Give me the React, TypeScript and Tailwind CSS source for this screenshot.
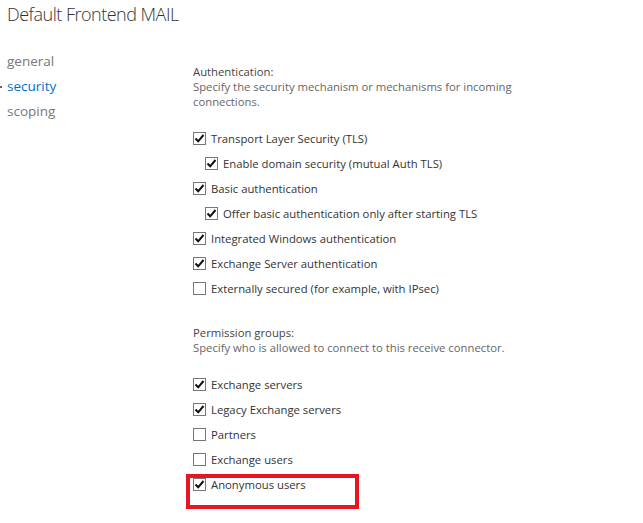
import React from "react";

interface Item {
  label: string;
  checked: boolean;
  indent?: boolean;
  marked?: boolean;
}

const authItems: Item[] = [
  { label: "Transport Layer Security (TLS)", checked: true },
  { label: "Enable domain security (mutual Auth TLS)", checked: true, indent: true },
  { label: "Basic authentication", checked: true },
  { label: "Offer basic authentication only after starting TLS", checked: true, indent: true },
  { label: "Integrated Windows authentication", checked: true },
  { label: "Exchange Server authentication", checked: true },
  { label: "Externally secured (for example, with IPsec)", checked: false },
];

const permItems: Item[] = [
  { label: "Exchange servers", checked: true },
  { label: "Legacy Exchange servers", checked: true },
  { label: "Partners", checked: false },
  { label: "Exchange users", checked: false },
  { label: "Anonymous users", checked: true, marked: true },
];

const CheckRow = ({ label, checked, indent, marked }: Item) => (
  <div className={`relative flex h-[25px] items-center gap-[5px] ${indent ? "pl-[12px]" : ""}`}>
    <span className="flex h-[13px] w-[13px] shrink-0 items-center justify-center border border-[#777] bg-white">
      {checked && (
        <svg width="11" height="11" viewBox="0 0 11 11">
          <path d="M1.5 5.5 L4.2 8.3 L9.5 2" fill="none" stroke="#111" strokeWidth="2" />
        </svg>
      )}
    </span>
    <span className="text-[11.3px] leading-[15px] text-[#333]">{label}</span>
    {/* red annotation box */}
    {marked && (
      <div className="absolute left-[-7px] top-[2.5px] h-[35px] w-[173px] border-[4px] border-[#e8141f]"></div>
    )}
  </div>
);

export default function App() {
  return (
    <div
      className="h-[523px] w-[643px] overflow-hidden bg-white"
      style={{ fontFamily: '"Open Sans", "Noto Sans", sans-serif' }}
    >
      <div className="pl-[7px] text-[18px] font-light leading-[28px] tracking-[-0.5px] text-[#333]">
        Default Frontend MAIL
      </div>
      <div className="flex">
        <div className="w-[193px] shrink-0 pt-[20.5px] text-[13.5px] leading-[25px]">
          <div className="pl-[7px] text-[#777]">general</div>
          <div className="relative pl-[7px] text-[#0072c6]">
            <span className="absolute left-0 top-[12px] h-[2px] w-[2px] bg-[#666]"></span>
            security
          </div>
          <div className="pl-[7px] text-[#777]">scoping</div>
        </div>
        <div className="flex flex-col pt-[35.5px] text-[11.3px] leading-[15px]">
          <div className="text-[#444]">Authentication:</div>
          <div className="w-[335px] text-[#666]">
            Specify the security mechanism or mechanisms for incoming connections.
          </div>
          <div className="mt-[17px] flex flex-col">
            {authItems.map((it) => (
              <CheckRow key={it.label} {...it} />
            ))}
          </div>
          <div className="mt-[24px] text-[#444]">Permission groups:</div>
          <div className="text-[#666]">
            Specify who is allowed to connect to this receive connector.
          </div>
          <div className="mt-[17px] flex flex-col">
            {permItems.map((it) => (
              <CheckRow key={it.label} {...it} />
            ))}
          </div>
        </div>
      </div>
    </div>
  );
}
